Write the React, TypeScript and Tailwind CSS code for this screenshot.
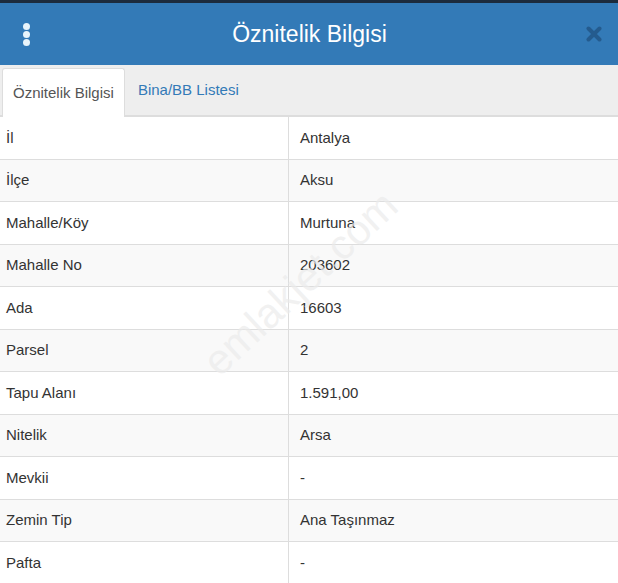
import * as React from "react";

const rows: [string, string][] = [
  ["İl", "Antalya"],
  ["İlçe", "Aksu"],
  ["Mahalle/Köy", "Murtuna"],
  ["Mahalle No", "203602"],
  ["Ada", "16603"],
  ["Parsel", "2"],
  ["Tapu Alanı", "1.591,00"],
  ["Nitelik", "Arsa"],
  ["Mevkii", "-"],
  ["Zemin Tip", "Ana Taşınmaz"],
  ["Pafta", "-"],
];

export default function App() {
  return (
    <div className="relative h-[583px] w-[618px] overflow-hidden bg-white font-['Liberation_Sans',Arial,sans-serif] text-[#333]">
      <div className="h-[3px] bg-[#1c2b3d]" />
      {/* header */}
      <div className="flex h-[62px] items-center bg-[#337ab7] px-[21px]">
        <div className="flex w-[10px] flex-col items-center gap-[1px]">
          <span className="h-[7px] w-[7px] rounded-full bg-[#e8f4fb]" />
          <span className="h-[7px] w-[7px] rounded-full bg-[#e8f4fb]" />
          <span className="h-[7px] w-[7px] rounded-full bg-[#e8f4fb]" />
        </div>
        <div className="flex-1 pl-[2px] text-center text-[23px] text-white">Öznitelik Bilgisi</div>
        <svg width="16" height="16" viewBox="0 0 16 16" className="mr-[-5px]">
          <path d="M2.5 2.5 L13.5 13.5 M13.5 2.5 L2.5 13.5" stroke="#245b8e" strokeWidth="4" strokeLinecap="round" />
        </svg>
      </div>
      {/* tabs */}
      <div className="flex h-[52px] items-end border-b-[2px] border-[#ddd] bg-[#eee] pl-[2px]">
        <div className="mb-[-2px] flex h-[49px] items-center rounded-t-[3px] border border-b-0 border-[#ddd] bg-white px-[10px] text-[15px] text-[#555]">
          Öznitelik Bilgisi
        </div>
        <div className="flex h-[49px] items-center px-[13px] text-[15px] text-[#337ab7]">Bina/BB Listesi</div>
      </div>
      {/* attribute table */}
      <div className="flex flex-col">
        {rows.map(([k, v], i) => (
          <div
            key={k}
            className={`grid h-[42.5px] grid-cols-[289px_1fr] border-b border-[#ddd] text-[15px] ${i % 2 === 1 ? "bg-[#f9f9f9]" : "bg-white"}`}
          >
            <div className="flex items-center border-r border-[#ddd] pl-[6px]">{k}</div>
            <div className="flex items-center pl-[11px]">{v}</div>
          </div>
        ))}
      </div>
      <div className="pointer-events-none absolute left-[300px] top-[283px] -translate-x-1/2 -translate-y-1/2 -rotate-[43deg] whitespace-nowrap text-[42px] text-[#ebebeb]/70">
        emlakjet.com
      </div>
    </div>
  );
}
